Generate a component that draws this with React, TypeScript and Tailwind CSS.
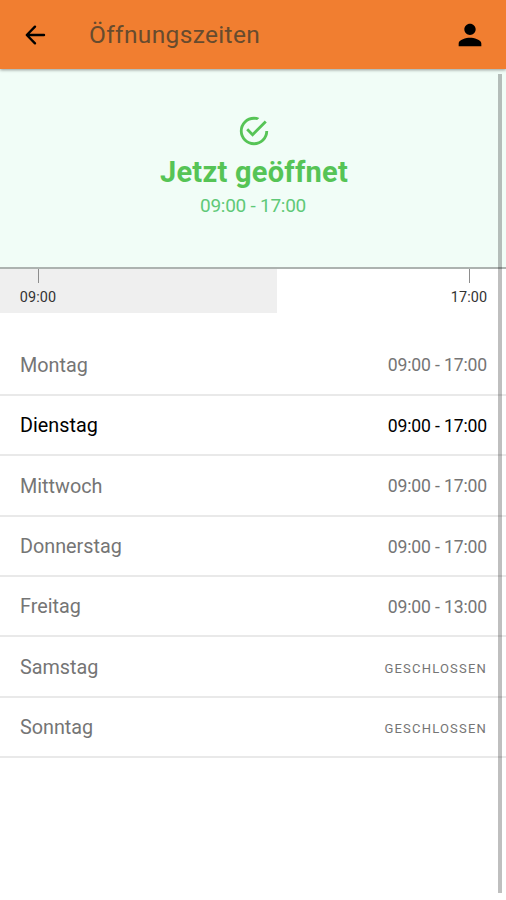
type Day = {
  name: string
  hours: string | null
}

const days: Day[] = [
  { name: 'Montag',     hours: '09:00 - 17:00' },
  { name: 'Dienstag',   hours: '09:00 - 17:00' },
  { name: 'Mittwoch',   hours: '09:00 - 17:00' },
  { name: 'Donnerstag', hours: '09:00 - 17:00' },
  { name: 'Freitag',    hours: '09:00 - 13:00' },
  { name: 'Samstag',    hours: null },
  { name: 'Sonntag',    hours: null },
]

const today = 'Dienstag'

function Header() {
  return (
    <header className="relative z-10 flex h-[69px] items-center bg-[#f17e30] pl-[25px] pr-[19px] shadow-[0_1px_3px_rgba(0,0,0,0.4)]">
      <button aria-label="Zurück">
        <svg width="21" height="20" viewBox="0 0 21 20" fill="none" stroke="#000" strokeWidth="2.4" strokeLinecap="round" strokeLinejoin="round">
          <path d="M10 1.7 1.8 10l8.2 8.3M2.2 10h16.8" />
        </svg>
      </button>
      <h1 className="ml-[43px] mt-[1px] flex-1 text-[24.5px] leading-8 tracking-[0.35px] text-[#674b2e]">
        Öffnungszeiten
      </h1>
      <button aria-label="Profil">
        <svg width="34" height="34" viewBox="0 0 24 24">
          <path d="M12 12c2.21 0 4-1.79 4-4s-1.79-4-4-4-4 1.79-4 4 1.79 4 4 4zm0 2c-2.67 0-8 1.34-8 4v2h16v-2c0-2.66-5.33-4-8-4z" />
        </svg>
      </button>
    </header>
  )
}

function Status() {
  return (
    <section className="flex h-[200px] flex-col items-center border-b-2 border-[#adb3b0] bg-[#f1fdf7] pt-[45px]">
      <svg className="ml-[2px]" width="34" height="34" viewBox="0 0 24 24" fill="#56c456">
        <path d="M20 12a8 8 0 0 1-8 8 8 8 0 0 1-8-8 8 8 0 0 1 8-8c.76 0 1.5.11 2.2.31l1.57-1.57A9.822 9.822 0 0 0 12 2 10 10 0 0 0 2 12a10 10 0 0 0 10 10 10 10 0 0 0 10-10M7.91 10.08 6.5 11.5 11 16 21 6l-1.41-1.42L11 13.17z" />
      </svg>
      <p className="ml-[2px] mt-[6px] text-[29px] font-bold leading-9 tracking-[0.25px] text-[#56c456]">Jetzt geöffnet</p>
      <p className="mt-[4px] text-[19px] leading-6 tracking-[-0.25px] text-[#5fc978]">09:00 - 17:00</p>
    </section>
  )
}

function Timeline() {
  return (
    <section className="flex h-11 text-[14.4px] leading-5 tracking-[0.1px] text-[#333]">
      <div className="flex w-[277px] bg-[#efefef] pl-[19px]">
        <Mark label="09:00" />
      </div>
      <div className="flex flex-1 justify-end pr-[18px]">
        <Mark label="17:00" />
      </div>
    </section>
  )
}

function Mark({ label }: { label: string }) {
  return (
    <div className="flex w-[38px] flex-col items-center">
      <div className="h-[14px] w-px bg-[#8d8d8d]" />
      <span className="mt-[5px]">{label}</span>
    </div>
  )
}

function Row({ day }: { day: Day }) {
  const isToday = day.name === today
  return (
    <li
      className={`flex h-[60.35px] items-center justify-between border-b-2 border-[#e9e9e9] pl-5 pr-[19px] ${
        isToday ? 'text-black' : 'text-[#757575]'
      }`}
    >
      <span className="mt-[2px] text-[19.8px]">{day.name}</span>
      {day.hours ? (
        <span className="mt-[2px] text-[17.6px] tracking-[-0.15px]">{day.hours}</span>
      ) : (
        <span className="mt-[5px] text-[13px] tracking-[1.2px]">GESCHLOSSEN</span>
      )}
    </li>
  )
}

export default function App() {
  return (
    <div className="relative h-[900px] w-[506px] overflow-hidden bg-white font-['Roboto',sans-serif]">
      <Header />
      <main>
        <Status />
        <Timeline />
        <ul className="mt-[22.5px]">
          {days.map((day) => (
            <Row key={day.name} day={day} />
          ))}
        </ul>
      </main>

      {/* Scroll indicator */}
      <div className="absolute right-[4px] top-[74px] h-[819px] w-1 bg-black/25" />
    </div>
  )
}
